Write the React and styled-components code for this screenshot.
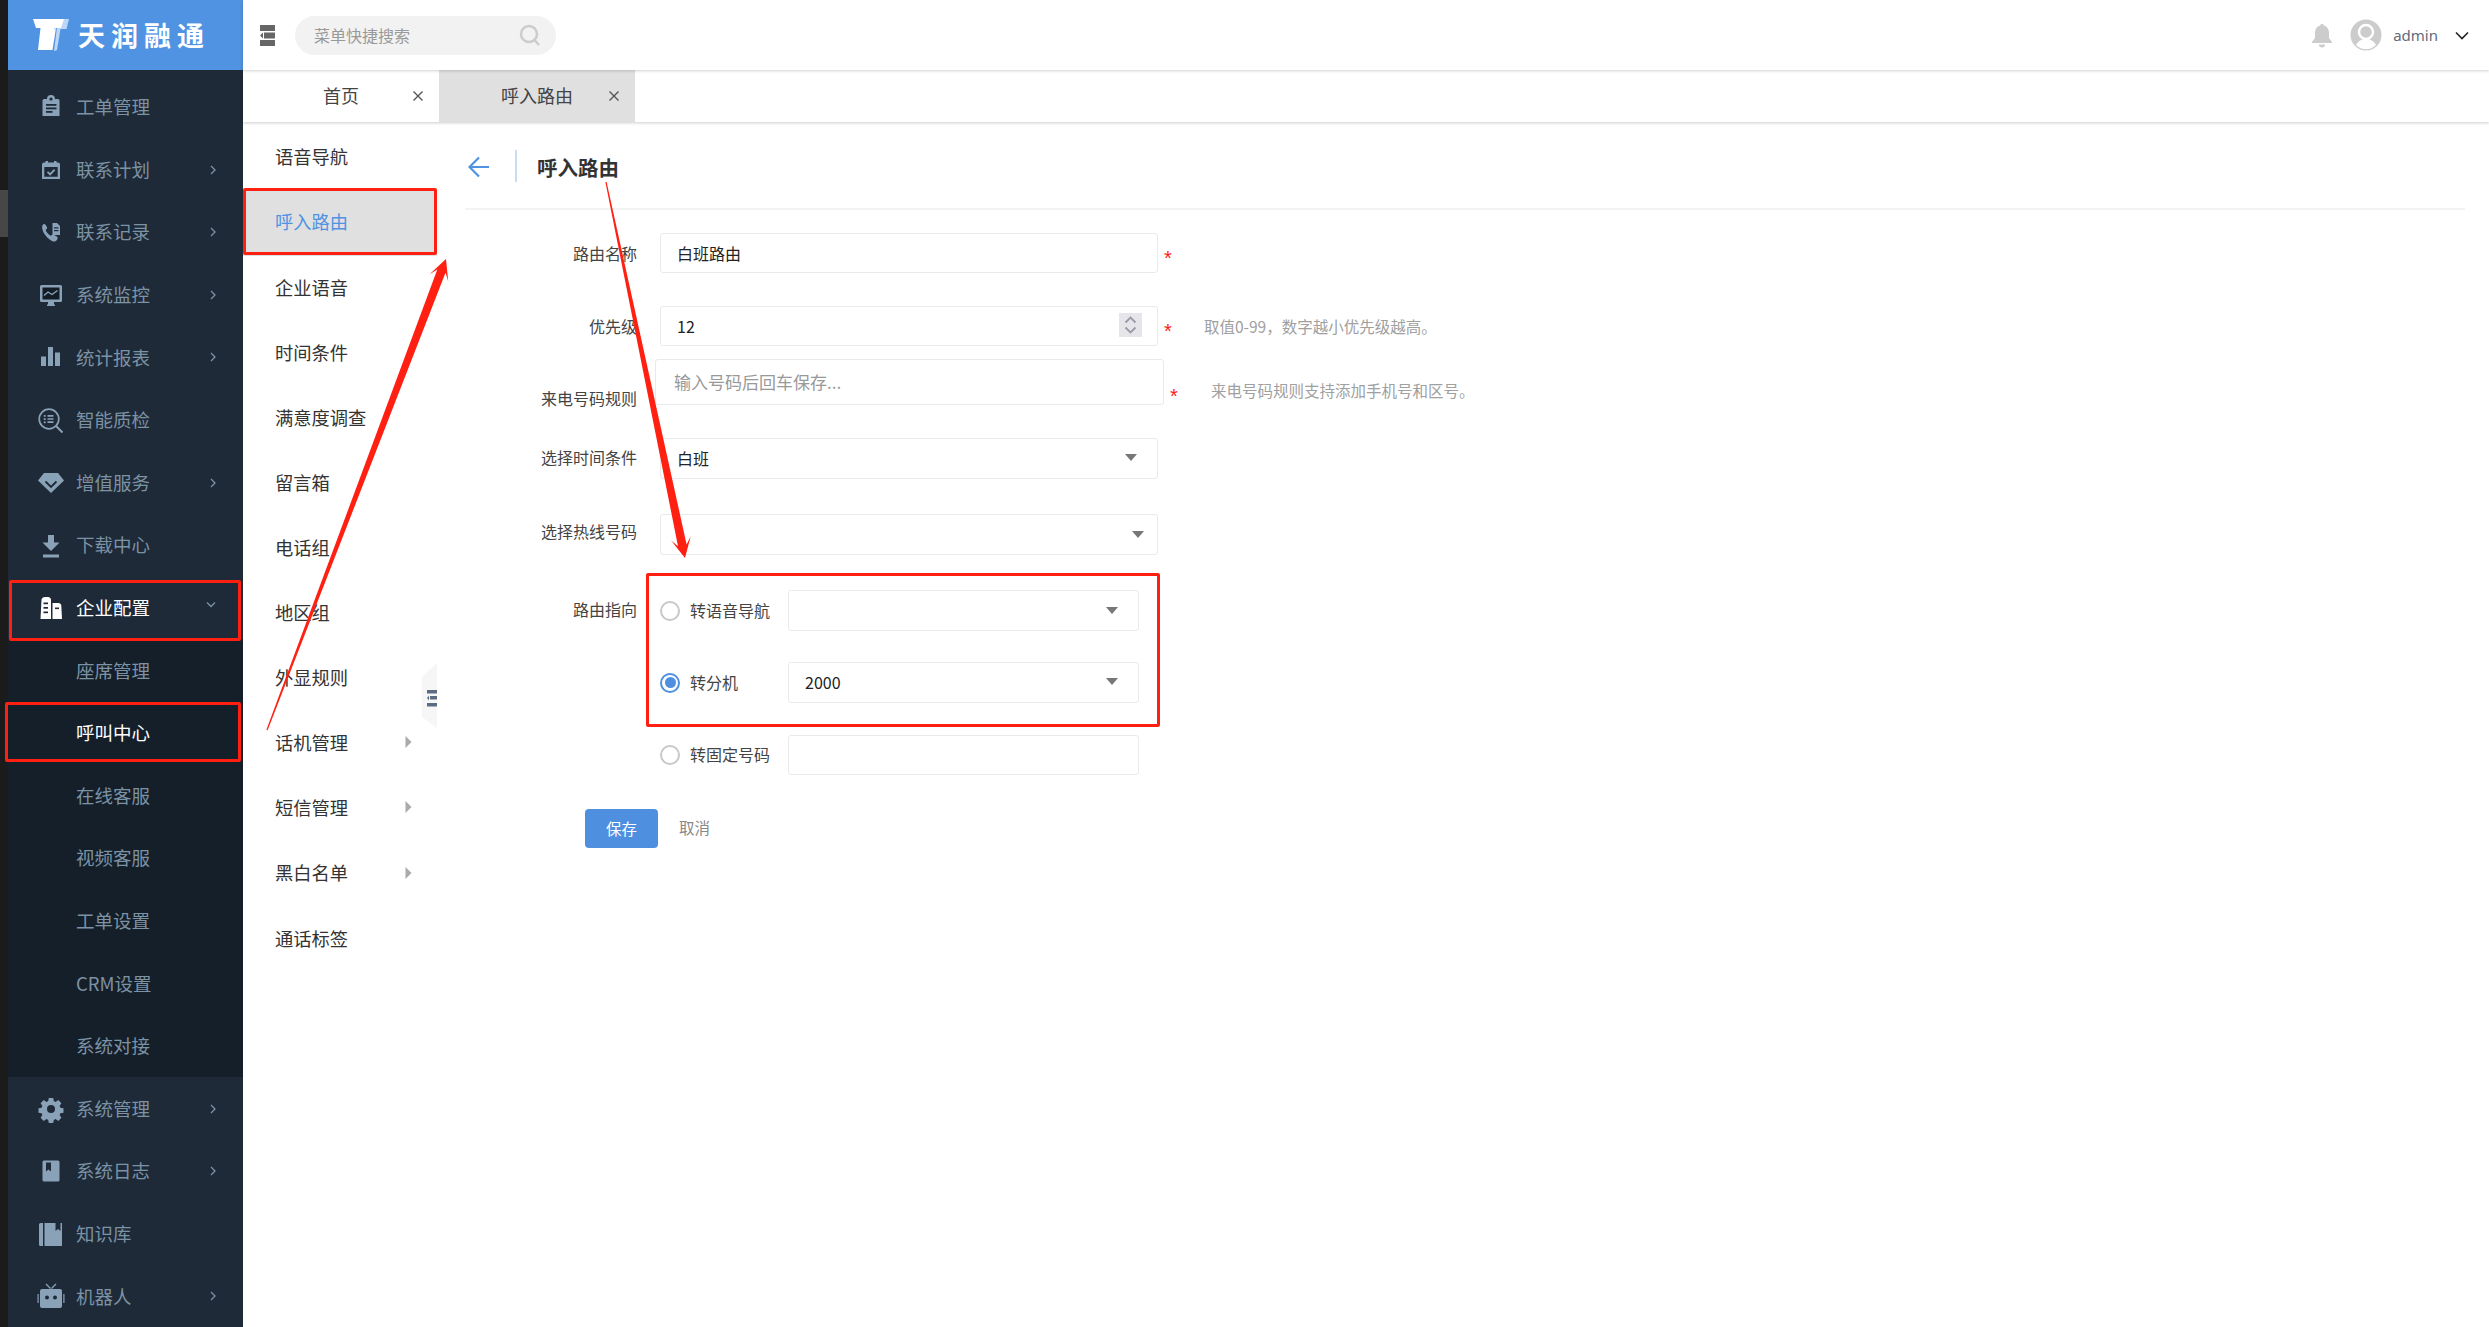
import React from "react";
import styled, { createGlobalStyle } from "styled-components";

const Global = createGlobalStyle`
  html, body { margin: 0; padding: 0; background: #fff; overflow: hidden; }
  * { box-sizing: border-box; }
  body { font-family: "Noto Sans CJK SC", "Noto Sans", "Liberation Sans", sans-serif; }
`;

const Page = styled.div`
  position: relative;
  display: flex;
  width: 2489px;
  height: 1327px;
  overflow: hidden;
  background: #fff;
`;

const EdgeStrip = styled.div`
  width: 8px;
  flex: none;
  background: #1b1b1b;
  padding-top: 190px;
`;
const EdgeThumb = styled.div`
  height: 47px;
  background: #474747;
`;

const Sidebar = styled.aside`
  width: 235px;
  flex: none;
  background: #1e2a37;
  height: 1327px;
  overflow: hidden;
`;
const Logo = styled.div`
  height: 70px;
  background: #5093e2;
  display: flex;
  align-items: center;
  padding-left: 24px;
  gap: 8px;
  margin-bottom: 5.7px;
`;
const LogoText = styled.span`
  color: #fff;
  font-size: 27px;
  font-weight: 700;
  letter-spacing: 6px;
  line-height: 1;
  white-space: nowrap;
  padding-bottom: 2px;
`;
const NavRow = styled.div`
  height: 62.6px;
  display: flex;
  align-items: center;
  padding-left: 27px;
  padding-right: 25px;
  color: ${(p) => (p.$active ? "#ffffff" : "#7c92a5")};
  font-size: 18.5px;
  line-height: 1;
`;
const NavIcon = styled.span`
  width: 32px;
  height: 32px;
  flex: none;
  margin-right: 9px;
  color: ${(p) => (p.$active ? "#ffffff" : "#8aa2b8")};
  svg { display: block; }
`;
const NavLabel = styled.span`
  white-space: nowrap;
  padding-bottom: 1px;
`;
const NavChevron = styled.span`
  margin-left: auto;
  width: 10px;
  height: 12px;
  display: flex;
  svg { display: block; }
`;
const SubList = styled.div`
  background: #151f29;
  height: 438.2px;
`;
const SubRow = styled.div`
  height: 62.6px;
  display: flex;
  align-items: center;
  padding-left: 68px;
  padding-bottom: 1px;
  font-size: 18.5px;
  line-height: 1;
  color: ${(p) => (p.$active ? "#ffffff" : "#7c92a5")};
`;

const Main = styled.main`
  flex: 1;
  min-width: 0;
  display: flex;
  flex-direction: column;
`;
const TopBar = styled.header`
  height: 70px;
  flex: none;
  display: flex;
  align-items: center;
  padding-left: 17px;
  padding-right: 20px;
  background: #fff;
  box-shadow: 0 1px 3px rgba(0, 0, 0, 0.18);
  position: relative;
  z-index: 2;
`;
const SearchBox = styled.div`
  width: 261px;
  height: 39px;
  margin-left: 20px;
  border-radius: 20px;
  background: #f2f2f2;
  display: flex;
  align-items: center;
  justify-content: space-between;
  padding: 0 15px 0 19px;
  color: #999;
  font-size: 16px;
`;
const TopRight = styled.div`
  margin-left: auto;
  display: flex;
  align-items: center;
`;
const BellIcon = styled.svg`
  display: block;
  margin-right: 17px;
`;
const UserName = styled.span`
  font-family: "Noto Sans", sans-serif;
  font-size: 15px;
  color: #5f6b7a;
  margin: 0 17px 0 11px;
  line-height: 1;
`;
const TabBar = styled.nav`
  height: 52px;
  flex: none;
  display: flex;
  background: #fff;
  box-shadow: 0 1px 3px rgba(0, 0, 0, 0.2);
  position: relative;
  z-index: 1;
`;
const Tab = styled.div`
  width: 196px;
  display: grid;
  grid-template-columns: 1fr auto 1fr;
  align-items: center;
  background: ${(p) => (p.$active ? "#e0e0e0" : "#fff")};
  color: #444;
  font-size: 18px;
  padding: 0 15px 3px;
  line-height: 1;
`;
const TabClose = styled.span`
  grid-column: 3;
  justify-self: end;
  display: flex;
  padding-top: 3px;
`;
const TabText = styled.span`
  grid-column: 2;
  white-space: nowrap;
`;

const Body = styled.div`
  flex: 1;
  display: flex;
  min-height: 0;
`;
const SubNav = styled.div`
  position: relative;
  width: 194px;
  flex: none;
  padding-top: 3.5px;
`;
const SubNavRow = styled.div`
  height: 65.1px;
  display: flex;
  align-items: center;
  justify-content: space-between;
  padding: 0 25px 3px 32px;
  font-size: 18.3px;
  line-height: 1;
  color: ${(p) => (p.$active ? "#5093e2" : "#333")};
  background: ${(p) => (p.$active ? "#e0e0e0" : "transparent")};
`;
const CollapseHandle = styled.svg`
  position: absolute;
  right: 0;
  top: 541px;
  display: block;
`;

const Content = styled.section`
  flex: 1;
  min-width: 0;
  padding: 0 24px 0 28px;
`;
const Header = styled.div`
  height: 88px;
  padding-top: 28px;
  display: flex;
  align-items: flex-start;
  border-bottom: 2px solid #f3f3f3;
`;
const BackButton = styled.span`
  width: 51.5px;
  height: 32px;
  display: flex;
  align-items: center;
  padding: 1px 0 0 3px;
  border-right: 2px solid #c9dcf3;
`;
const Title = styled.h1`
  margin: 0 0 0 20.5px;
  padding-top: 1px;
  font-size: 20.5px;
  line-height: 32px;
  font-weight: 700;
  color: #333;
`;
const Form = styled.form`
  display: flex;
  flex-direction: column;
  padding-top: 23px;
`;
const Row = styled.div`
  display: flex;
  align-items: center;
  height: ${(p) => p.$h}px;
  margin-top: ${(p) => p.$gap || 0}px;
`;
const Label = styled.label`
  width: 172px;
  flex: none;
  text-align: right;
  font-size: 16px;
  line-height: 20px;
  color: #444;
  white-space: nowrap;
  margin-right: ${(p) => p.$after ?? 23}px;
  padding-top: ${(p) => p.$down || 0}px;
  padding-bottom: ${(p) => p.$up || 0}px;
`;
const Field = styled.input`
  width: ${(p) => p.$w || 498}px;
  height: 100%;
  flex: none;
  border: 1.5px solid #eaeaea;
  border-radius: 3px;
  outline: none;
  background: #fff;
  padding: ${(p) => p.$pad || "0 16px"};
  font-family: inherit;
  font-size: 16px;
  color: #222;
  &::placeholder { color: #999; opacity: 1; font-size: 17px; }
`;
const Box = styled.div`
  position: relative;
  width: ${(p) => p.$w || 498}px;
  height: 100%;
  flex: none;
  display: flex;
  align-items: center;
  border: 1.5px solid #eaeaea;
  border-radius: 3px;
  padding: 0 ${(p) => p.$inset || 21}px ${(p) => p.$lift || 0}px 16px;
  font-size: 16px;
  color: #222;
  line-height: 1;
`;
const Caret = styled.span`
  margin-left: auto;
  margin-right: -1px;
  width: 0;
  height: 0;
  border-left: 6.5px solid transparent;
  border-right: 6.5px solid transparent;
  border-top: 7px solid #777;
`;
const Spinner = styled.span`
  margin-left: auto;
  margin-right: -6px;
  width: 23px;
  height: 24px;
  margin-top: -3px;
  background: #e5e5ea;
  display: flex;
  svg { display: block; }
`;
const Star = styled.span`
  margin-left: 6px;
  color: #ff1a1a;
  font-family: "Liberation Sans", sans-serif;
  font-size: 20px;
  line-height: 16px;
  padding-top: ${(p) => p.$down || 10}px;
  width: 10px;
`;
const Hint = styled.span`
  margin-left: ${(p) => p.$left || 31}px;
  color: #a0a0a0;
  font-size: 15.5px;
  line-height: 20px;
  white-space: nowrap;
  padding-top: ${(p) => p.$down || 0}px;
`;
const RadioMark = styled.span`
  width: 20px;
  height: 20px;
  flex: none;
  border-radius: 50%;
  border: 2px solid ${(p) => (p.$on ? "#4f8fe0" : "#c8c8c8")};
  display: flex;
  align-items: center;
  justify-content: center;
  &::after {
    content: "";
    width: 11px;
    height: 11px;
    border-radius: 50%;
    background: ${(p) => (p.$on ? "#4f8fe0" : "transparent")};
  }
`;
const RadioText = styled.span`
  width: 98px;
  flex: none;
  margin-left: 10px;
  padding-bottom: 2px;
  font-size: 16px;
  line-height: 1;
  color: #444;
  white-space: nowrap;
`;
const Actions = styled.div`
  display: flex;
  align-items: center;
  gap: 21px;
  padding-left: 120px;
  margin-top: 34px;
`;
const SaveButton = styled.button`
  width: 73px;
  height: 39px;
  border: none;
  border-radius: 4px;
  background: #4f8fe0;
  color: #fff;
  font-family: inherit;
  font-size: 15.5px;
  padding: 0 0 2px;
`;
const CancelLink = styled.span`
  color: #888;
  font-size: 15.5px;
  line-height: 1;
  padding-bottom: 2px;
`;

const Callout = styled.div`
  position: absolute;
  left: ${(p) => p.$x}px;
  top: ${(p) => p.$y}px;
  width: ${(p) => p.$w}px;
  height: ${(p) => p.$h}px;
  border: 3.5px solid #ff2012;
  border-radius: 2px;
  pointer-events: none;
  z-index: 5;
`;
const ArrowLayer = styled.svg`
  position: absolute;
  left: 0;
  top: 0;
  z-index: 6;
  pointer-events: none;
`;

const I = ({ children }) => (
  <svg width="32" height="32" viewBox="0 0 32 32" fill="currentColor">{children}</svg>
);
const BG = "#1e2a37";
const icons = {
  order: (
    <I>
      <path d="M7.5 9.5a1.5 1.5 0 0 1 1.5-1.5h3a4 4 0 0 1 8 0h3a1.5 1.5 0 0 1 1.5 1.5V25h-17z" />
      <circle cx="16" cy="8" r="1.6" fill={BG} />
      <rect x="11" y="13" width="10.5" height="1.8" fill={BG} />
      <rect x="11" y="16.5" width="10.5" height="1.8" fill={BG} />
      <rect x="11" y="20" width="6.5" height="1.8" fill={BG} />
    </I>
  ),
  plan: (
    <I>
      <path fillRule="evenodd" d="M7 10.5A2 2 0 0 1 9 8.5h1.500V7h2.500v1.500h6V7h2.500v1.500H23a2 2 0 0 1 2 2V25H7zM9.300 13v9.700h13.400V13z" />
      <path d="M12.500 17.800l2.600 2.600 4.500-4.800" fill="none" stroke="currentColor" strokeWidth="1.900" />
    </I>
  ),
  phone: (
    <I>
      <path d="M7.300 9.500c1-1.500 2.400-1.800 3.200-.8l1.500 2.600c.4.700.1 1.400-.6 2l-.8.7c.8 2.300 3 4.700 5.200 5.800l1-.9c.6-.6 1.300-.6 2-.2l3 1.700c1 .6 1 2 .3 3.300-.8 1.300-2.300 2.100-4 1.800C13 23.500 5.800 15.500 7.300 9.500z" />
      <path d="M17.500 7h4.500l3 3v9h-7.500z" />
      <rect x="19" y="11.300" width="4.500" height="1.200" fill={BG} />
      <rect x="19" y="14" width="4.500" height="1.200" fill={BG} />
    </I>
  ),
  monitor: (
    <I>
      <path d="M6.500 6h19A1.500 1.500 0 0 1 27 7.500v14a1.500 1.500 0 0 1-1.500 1.500H19v2.500h1V27h-8v-1.500h1V23H6.500A1.500 1.500 0 0 1 5 21.500v-14A1.500 1.500 0 0 1 6.500 6z" />
      <rect x="7.500" y="8.500" width="17" height="12" fill="#141d26" />
      <path d="M9 16.500l4-3.500 4 2.500 5.500-4" fill="none" stroke="#8aa2b8" strokeWidth="1.400" />
    </I>
  ),
  stats: (
    <I>
      <rect x="6" y="15.500" width="5" height="9.500" />
      <rect x="13" y="6" width="5" height="19" />
      <rect x="20" y="11.500" width="5" height="13.500" />
    </I>
  ),
  inspect: (
    <I>
      <g fill="none" stroke="currentColor" strokeWidth="1.700">
        <circle cx="14" cy="15" r="9.800" />
        <path d="M21 22l6.500 6.500" strokeWidth="2" />
        <path d="M12.500 11.800h6M12.500 15h6M12.500 18.200h6" />
      </g>
      <rect x="8.800" y="11" width="1.800" height="1.800" />
      <rect x="8.800" y="14.200" width="1.800" height="1.800" />
      <rect x="8.800" y="17.400" width="1.800" height="1.800" />
    </I>
  ),
  gem: (
    <I>
      <path d="M9 6h14l6 7.500L16 26 3 13.500z" />
      <path d="M10.500 14.500l5.500 5.500 5.500-5.500" fill="none" stroke={BG} strokeWidth="1.800" />
    </I>
  ),
  download: (
    <I>
      <path d="M13 3h6v7.500h5.500L16 19 7.500 10.500H13z" transform="translate(0 3)" />
      <rect x="8" y="25.500" width="16" height="3" />
    </I>
  ),
  company: (
    <I>
      <path d="M6.500 7.500C7 5.800 8.500 5 10 5h3c1.500 0 2.800 1 3 2.500V27H5.500z" />
      <path d="M17.500 11h6c1.500 0 2.500 1 2.800 2.500L27 27h-9.500z" />
      <rect x="8.500" y="10.500" width="4.500" height="1.700" fill={BG} />
      <rect x="8.500" y="15" width="4.500" height="1.700" fill={BG} />
      <rect x="8.500" y="19.500" width="4.500" height="1.700" fill={BG} />
      <rect x="20" y="15.500" width="4" height="1.600" fill={BG} />
    </I>
  ),
  gear: (
    <I>
      <path fillRule="evenodd" d="M13.800 5h4.400l.6 3.100 1.800.8 2.700-1.800 3.100 3.100-1.800 2.700.8 1.800 3.100.6v4.400l-3.100.6-.8 1.800 1.800 2.700-3.100 3.100-2.700-1.800-1.800.8-.6 3.100h-4.400l-.6-3.100-1.800-.8-2.700 1.800-3.100-3.100 1.800-2.700-.8-1.800-3.100-.6v-4.400l3.100-.6.8-1.800-1.800-2.700 3.100-3.100 2.700 1.800 1.800-.8zM16 12a4 4 0 1 0 0 8 4 4 0 0 0 0-8z" />
    </I>
  ),
  logbook: (
    <I>
      <path d="M9 5.500h14a1.500 1.500 0 0 1 1.500 1.500v18a1.500 1.500 0 0 1-1.500 1.500H9A1.500 1.500 0 0 1 7.500 25V7A1.500 1.500 0 0 1 9 5.500z" />
      <path d="M11 7.500h5v9l-2.500-2-2.500 2z" fill={BG} />
    </I>
  ),
  library: (
    <I>
      <path d="M5.500 5h2.500v23H5.500A1.500 1.500 0 0 1 4 26.500v-20A1.500 1.500 0 0 1 5.500 5z" />
      <path d="M9.500 5h11v8l2.500-2 2.500 2V5h1.500v23H9.500z" />
    </I>
  ),
  robot: (
    <I>
      <path d="M7 10h18a2 2 0 0 1 2 2v15a2 2 0 0 1-2 2H7a2 2 0 0 1-2-2V12a2 2 0 0 1 2-2z" transform="translate(0 -1)" />
      <path d="M11 4l4.500 4.500M21 4l-4.500 4.500" fill="none" stroke="currentColor" strokeWidth="1.300" />
      <rect x="2.500" y="14" width="1.200" height="9" />
      <rect x="28.300" y="14" width="1.200" height="9" />
      <circle cx="12" cy="17.500" r="2" fill={BG} />
      <circle cx="20" cy="17.500" r="2" fill={BG} />
    </I>
  ),
};

const ChevronRight = () => (
  <svg width="10" height="12" viewBox="0 0 10 12">
    <path d="M3 2L7 6l-4 4" fill="none" stroke="#7c92a5" strokeWidth="1.300" />
  </svg>
);
const ChevronDown = () => (
  <svg width="10" height="12" viewBox="0 0 10 12" style={{ marginLeft: -2, marginTop: -3 }}>
    <path d="M1 3.500L5 7.500l4-4" fill="none" stroke="#7c92a5" strokeWidth="1.300" />
  </svg>
);
const Cross = () => (
  <svg width="12" height="12" viewBox="0 0 12 12">
    <path d="M1.500 1.500l9 9M10.500 1.500l-9 9" stroke="#555" strokeWidth="1.400" />
  </svg>
);
const Triangle = () => (
  <svg width="7" height="12" viewBox="0 0 7 12">
    <path d="M0.500 0L6.500 6 0.500 12z" fill="#aaa" />
  </svg>
);

const topItems = [
  ["工单管理", "order"],
  ["联系计划", "plan", 1],
  ["联系记录", "phone", 1],
  ["系统监控", "monitor", 1],
  ["统计报表", "stats", 1],
  ["智能质检", "inspect"],
  ["增值服务", "gem", 1],
  ["下载中心", "download"],
];
const subItems = ["座席管理", "呼叫中心", "在线客服", "视频客服", "工单设置", "CRM设置", "系统对接"];
const bottomItems = [
  ["系统管理", "gear", 1],
  ["系统日志", "logbook", 1],
  ["知识库", "library"],
  ["机器人", "robot", 1],
];
const sideNav = [
  ["语音导航"],
  ["呼入路由", 0, 1],
  ["企业语音"],
  ["时间条件"],
  ["满意度调查"],
  ["留言箱"],
  ["电话组"],
  ["地区组"],
  ["外显规则"],
  ["话机管理", 1],
  ["短信管理", 1],
  ["黑白名单", 1],
  ["通话标签"],
];

const NavItem = ({ label, icon, arrow }) => (
  <NavRow>
    <NavIcon>{icons[icon]}</NavIcon>
    <NavLabel>{label}</NavLabel>
    {arrow ? <NavChevron><ChevronRight /></NavChevron> : null}
  </NavRow>
);

export default function App() {
  return (
    <Page>
      <Global />
      <EdgeStrip><EdgeThumb /></EdgeStrip>
      <Sidebar>
        <Logo>
          <svg width="38" height="36" viewBox="0 0 38 36">
            <path d="M26 2h11l-2.500 10h-6l-3.500 21-3 1z" fill="#bcd6f5" />
            <path d="M1 2h31l-3 9h-5l-3.500 22H6L8.500 11H4z" fill="#fff" />
            <path d="M24 11l-1 3-1-3z" fill="#bcd6f5" />
          </svg>
          <LogoText>天润融通</LogoText>
        </Logo>
        {topItems.map(([l, i, a]) => <NavItem key={l} label={l} icon={i} arrow={a} />)}
        <NavRow $active>
          <NavIcon $active>{icons.company}</NavIcon>
          <NavLabel>企业配置</NavLabel>
          <NavChevron><ChevronDown /></NavChevron>
        </NavRow>
        <SubList>
          {subItems.map((s) => <SubRow key={s} $active={s === "呼叫中心"}>{s}</SubRow>)}
        </SubList>
        {bottomItems.map(([l, i, a]) => <NavItem key={l} label={l} icon={i} arrow={a} />)}
      </Sidebar>
      <Main>
        <TopBar>
          <svg width="15" height="21" viewBox="0 0 15 21">
            <rect width="15" height="6" fill="#666" />
            <rect y="15" width="15" height="6" fill="#666" />
            <rect x="4" y="7.500" width="11" height="6" fill="#666" />
            <path d="M3 7.500v6L0 10.500z" fill="#666" />
          </svg>
          <SearchBox>
            菜单快捷搜索
            <svg width="22" height="22" viewBox="0 0 22 22">
              <circle cx="10" cy="10" r="8" fill="none" stroke="#ccc" strokeWidth="2.500" />
              <path d="M15.500 16l4.500 5" stroke="#ccc" strokeWidth="2.500" />
            </svg>
          </SearchBox>
          <TopRight>
            <BellIcon width="22" height="26" viewBox="0 0 22 26">
              <path d="M11 2c1 0 1.700.6 1.800 1.500C16.500 4.500 18 7.600 18 11v5l3 4v1H1v-1l3-4v-5c0-3.400 1.500-6.500 5.200-7.500C9.300 2.600 10 2 11 2z" fill="#ccc" />
              <path d="M8 22.500h6a3 3 0 0 1-6 0z" fill="#ccc" />
            </BellIcon>
            <svg width="32" height="32" viewBox="0 0 32 32">
              <circle cx="16" cy="16" r="15.500" fill="#ccc" />
              <circle cx="16" cy="13" r="7" fill="none" stroke="#fff" strokeWidth="2.500" />
              <path d="M6 26c3-5 6-6 10-6s7 1 10 6a14 14 0 0 1-20 0z" fill="#fff" />
            </svg>
            <UserName>admin</UserName>
            <svg width="14" height="9" viewBox="0 0 14 9">
              <path d="M1 1.500l6 6 6-6" fill="none" stroke="#222" strokeWidth="1.600" />
            </svg>
          </TopRight>
        </TopBar>
        <TabBar>
          <Tab>
            <TabText>首页</TabText>
            <TabClose><Cross /></TabClose>
          </Tab>
          <Tab $active>
            <TabText>呼入路由</TabText>
            <TabClose><Cross /></TabClose>
          </Tab>
        </TabBar>
        <Body>
          <SubNav>
            {sideNav.map(([l, arrow, active]) => (
              <SubNavRow key={l} $active={active}>
                {l}
                {arrow ? <Triangle /> : null}
              </SubNavRow>
            ))}
            <CollapseHandle width="15" height="65" viewBox="0 0 15 65">
              <path d="M0 14L15 0v65L0 54z" fill="#f6f6f6" />
              <rect x="5" y="27" width="10" height="3.500" fill="#5a6b82" />
              <rect x="8" y="33" width="7" height="3.500" fill="#5a6b82" />
              <path d="M7 32.500v5L5 35z" fill="#5a6b82" />
              <rect x="5" y="40" width="10" height="3.500" fill="#5a6b82" />
            </CollapseHandle>
          </SubNav>
          <Content>
            <Header>
              <BackButton>
                <svg width="21" height="22" viewBox="0 0 21 22">
                  <path d="M11 1.500L1.500 11l9.500 9.500M2 11h19" fill="none" stroke="#5093e2" strokeWidth="2.200" />
                </svg>
              </BackButton>
              <Title>呼入路由</Title>
            </Header>
            <Form>
              <Row $h={40}>
                <Label>路由名称</Label>
                <Field readOnly value="白班路由" />
                <Star>*</Star>
              </Row>
              <Row $h={40} $gap={33}>
                <Label>优先级</Label>
                <Box>
                  12
                  <Spinner>
                    <svg width="23" height="24" viewBox="0 0 23 24">
                      <path d="M6.500 9.500l5-5 5 5M6.500 14.500l5 5 5-5" fill="none" stroke="#9a9aa8" strokeWidth="1.800" />
                    </svg>
                  </Spinner>
                </Box>
                <Star>*</Star>
                <Hint $left={30}>取值0-99，数字越小优先级越高。</Hint>
              </Row>
              <Row $h={46} $gap={13}>
                <Label $after={18} $down={32}>来电号码规则</Label>
                <Field $w={509} $pad="0 14px 0 18px" readOnly placeholder="输入号码后回车保存..." />
                <Star $down={27}>*</Star>
                <Hint $left={31} $down={16}>来电号码规则支持添加手机号和区号。</Hint>
              </Row>
              <Row $h={41} $gap={33}>
                <Label $up={3}>选择时间条件</Label>
                <Box $lift={2}>白班<Caret /></Box>
              </Row>
              <Row $h={41} $gap={35}>
                <Label $up={7}>选择热线号码</Label>
                <Box $inset={14}><Caret /></Box>
              </Row>
              <Row $h={41} $gap={35}>
                <Label $up={4}>路由指向</Label>
                <RadioMark />
                <RadioText>转语音导航</RadioText>
                <Box $w={351}><Caret /></Box>
              </Row>
              <Row $h={41} $gap={31}>
                <Label />
                <RadioMark $on />
                <RadioText>转分机</RadioText>
                <Box $w={351} $lift={2}>2000<Caret /></Box>
              </Row>
              <Row $h={40} $gap={32}>
                <Label />
                <RadioMark />
                <RadioText>转固定号码</RadioText>
                <Field $w={351} readOnly />
              </Row>
              <Actions>
                <SaveButton type="button">保存</SaveButton>
                <CancelLink>取消</CancelLink>
              </Actions>
            </Form>
          </Content>
        </Body>
      </Main>

      <Callout $x={9} $y={580} $w={232} $h={61} />
      <Callout $x={5} $y={702} $w={236} $h={60} />
      <Callout $x={243} $y={188} $w={194} $h={67} />
      <Callout $x={646} $y={573} $w={514} $h={154} />
      <ArrowLayer width="2489" height="1327" viewBox="0 0 2489 1327">
        <polygon fill="#ff2012" points="446,259 448.200,281.200 445.500,272.700 267.600,730.200 266.400,729.800 437.300,269.600 429.600,274.200" />
        <polygon fill="#ff2012" points="685,558 671.100,540.500 678,546.200 605.400,182.100 606.600,181.900 686.600,544.400 690.700,536.300" />
      </ArrowLayer>
    </Page>
  );
}
